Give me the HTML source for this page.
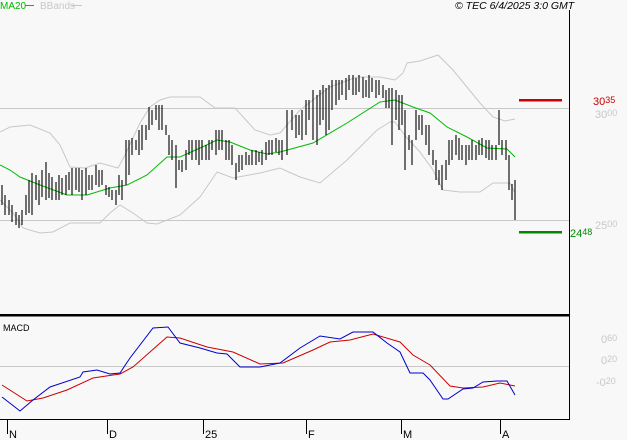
<!DOCTYPE html>
<html><head><meta charset="utf-8"><style>
html,body{margin:0;padding:0;background:#f8f8f8;}
body{width:627px;height:440px;overflow:hidden;position:relative;font-family:"Liberation Sans",sans-serif;}
svg{position:absolute;left:0;top:0}
</style></head><body>
<svg width="627" height="440" viewBox="0 0 627 440" font-family="Liberation Sans, sans-serif">
<rect width="627" height="440" fill="#f8f8f8"/>
<line x1="0" y1="108.5" x2="569" y2="108.5" stroke="#c8c8c8"/>
<line x1="0" y1="220.5" x2="569" y2="220.5" stroke="#c8c8c8"/>
<line x1="0" y1="366.5" x2="569" y2="366.5" stroke="#c8c8c8"/>
<polyline fill="none" stroke="#c8c8c8" stroke-width="1" points="0,132 10,127 30,125 50,133 60,145 70,167 85,168 100,163 118,168 125,155 140,123 150,107 160,100 170,97 200,97 215,108 235,108 255,130 270,135 280,133 300,110 330,87 357,77 380,77 395,80 403,73 407,63 420,61 438,55 453,70 480,103 493,117 505,121 515,119"/>
<polyline fill="none" stroke="#c8c8c8" stroke-width="1" points="0,200 13,213 23,228 40,233 53,232 70,223 100,223 110,213 120,205 133,213 147,223 157,224 180,215 200,197 217,172 233,178 260,173 280,168 300,177 320,183 347,160 377,130 390,122 395,122 407,138 420,152 433,170 443,190 460,192 480,192 493,183 510,183 515,193"/>
<polyline fill="none" stroke="#00bb00" stroke-width="1" points="0,165 10,170 20,177 40,185 67,195 87,195 110,188 127,185 147,175 167,157 180,157 200,148 217,140 230,142 250,150 267,154 280,152 313,143 347,123 380,102 395,100 413,107 430,113 447,127 467,137 487,148 507,149 515,157"/>
<path fill="none" stroke="#000" stroke-width="1.1" d="M2 185V205M5 195V215M9 200V215M12 205V222M16 212V225M19 215V228M22 210V225M26 195V215M29 180V213M32 173V215M36 175V200M39 180V205M42 170V197M46 162V200M49 173V198M52 177V200M56 182V200M59 175V200M62 178V195M66 175V195M69 172V190M72 168V195M76 168V190M79 168V192M82 170V200M86 168V195M89 175V190M92 175V190M96 165V185M99 170V187M102 170V185M106 185V195M109 187V197M112 190V200M116 190V205M119 175V195M122 180V200M126 140V185M129 140V175M132 138V155M136 140V150M139 130V155M142 125V150M146 125V140M149 107V130M152 110V125M156 105V120M159 105V130M162 105V130M166 125V135M169 135V155M172 140V160M176 145V188M179 160V170M182 160V172M186 150V170M189 140V155M192 140V160M196 140V160M199 140V165M202 140V160M206 145V160M209 140V160M212 140V150M216 130V155M219 130V150M222 130V150M226 140V160M229 140V160M232 145V165M236 163V180M239 155V172M242 155V170M246 152V165M249 155V165M252 150V165M256 150V165M259 152V162M262 150V165M266 142V160M269 140V155M272 140V155M276 138V152M279 140V155M282 140V160M287 110V155M292 110V130M296 115V138M299 115V135M302 110V140M306 100V135M309 100V120M313 90V140M317 95V145M320 90V125M323 85V120M326 88V135M329 85V130M332 80V110M336 80V105M339 80V100M342 80V95M346 78V100M349 75V90M353 75V95M356 78V95M359 75V92M363 77V98M366 80V97M369 75V98M372 78V92M376 80V98M379 80V95M383 85V98M386 90V108M389 88V108M392 88V145M396 90V120M399 95V130M402 95V125M405 110V170M409 135V150M412 140V165M416 110V140M419 115V130M422 115V135M426 125V145M429 125V155M433 150V165M436 160V180M439 170V185M442 165V190M446 160V180M449 140V165M452 140V160M456 135V155M459 138V160M462 145V160M466 145V165M469 145V160M472 140V160M476 145V160M479 140V155M482 138V155M486 140V158M489 140V160M492 145V160M496 145V160M499 110V145M502 140V155M506 140V160M509 155V190M512 184V200M515 180V220"/>
<rect x="519" y="99" width="43" height="2.5" fill="#cc0000"/>
<rect x="519" y="231" width="43" height="2.5" fill="#008800"/>
<line x1="569.5" y1="10" x2="569.5" y2="420" stroke="#000"/>
<rect x="0" y="314" width="570" height="2.5" fill="#000"/>
<line x1="0" y1="419.5" x2="570" y2="419.5" stroke="#000"/>
<g stroke="#000"><line x1="7.5" y1="420" x2="7.5" y2="434"/><line x1="107.5" y1="420" x2="107.5" y2="434"/><line x1="203.5" y1="420" x2="203.5" y2="434"/><line x1="306.5" y1="420" x2="306.5" y2="434"/><line x1="401.5" y1="420" x2="401.5" y2="434"/><line x1="500.5" y1="420" x2="500.5" y2="434"/></g>
<g font-size="11" fill="#000"><text x="9" y="438">N</text><text x="109" y="438">D</text><text x="205" y="438">25</text><text x="308" y="438">F</text><text x="403" y="438">M</text><text x="502" y="438">A</text></g>
<text x="3" y="331" font-size="9" fill="#000">MACD</text>
<polyline fill="none" stroke="#cc0000" stroke-width="1" points="2,385 27,401 43,398 67,390 93,378 113,375 120,374 133,367 167,337 180,338 207,347 233,352 260,364 283,363 313,350 330,342 350,340 373,334 400,342 413,355 430,365 450,386 463,388 483,387 500,383 515,386"/>
<polyline fill="none" stroke="#0000cc" stroke-width="1" points="2,397 20,411 33,400 50,387 80,377 83,372 97,370 110,374 120,373 130,358 153,328 168,327 180,343 200,348 217,353 227,354 240,367 260,367 280,363 300,348 320,336 340,339 353,332 373,332 387,343 400,352 410,373 423,373 430,380 443,399 448,399 463,389 473,388 483,382 497,381 507,381 515,395"/>
<g fill="#c8c8c8" font-size="11"><text x="595" y="118">30<tspan font-size="9" dy="-2">00</tspan></text><text x="595" y="229">25<tspan font-size="9" dy="-2">00</tspan></text>
<text x="601" y="343">0<tspan font-size="9" dy="-2">60</tspan></text><text x="601" y="364">0<tspan font-size="9" dy="-2">20</tspan></text><text x="596" y="386">-0<tspan font-size="9" dy="-2">20</tspan></text></g>
<text x="593" y="105" font-size="11" fill="#cc0000">30<tspan font-size="9" dy="-2">35</tspan></text>
<text x="570" y="237" font-size="11" fill="#008800">24<tspan font-size="9" dy="-2">48</tspan></text>
<text x="0" y="9" font-size="10" fill="#00bb00">MA20</text>
<line x1="25" y1="5.5" x2="34" y2="5.5" stroke="#00bb00"/>
<text x="40" y="9" font-size="10" fill="#c8c8c8">BBands</text>
<line x1="72" y1="5.5" x2="82" y2="5.5" stroke="#c8c8c8"/>
<text x="455" y="9" font-size="10.5" font-style="italic" fill="#000">© TEC 6/4/2025 3:0 GMT</text>
</svg>
</body></html>
